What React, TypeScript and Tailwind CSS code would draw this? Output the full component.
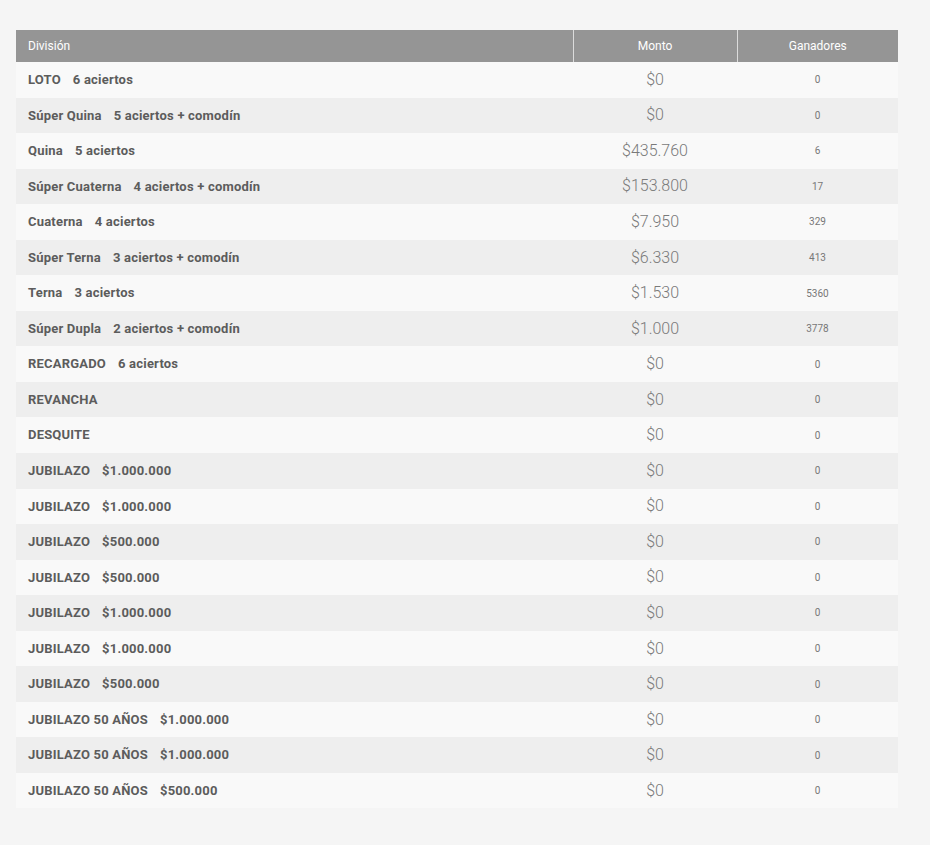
const rows: [string, string, string, string][] = [
  ["LOTO", "6 aciertos", "$0", "0"],
  ["Súper Quina", "5 aciertos + comodín", "$0", "0"],
  ["Quina", "5 aciertos", "$435.760", "6"],
  ["Súper Cuaterna", "4 aciertos + comodín", "$153.800", "17"],
  ["Cuaterna", "4 aciertos", "$7.950", "329"],
  ["Súper Terna", "3 aciertos + comodín", "$6.330", "413"],
  ["Terna", "3 aciertos", "$1.530", "5360"],
  ["Súper Dupla", "2 aciertos + comodín", "$1.000", "3778"],
  ["RECARGADO", "6 aciertos", "$0", "0"],
  ["REVANCHA", "", "$0", "0"],
  ["DESQUITE", "", "$0", "0"],
  ["JUBILAZO", "$1.000.000", "$0", "0"],
  ["JUBILAZO", "$1.000.000", "$0", "0"],
  ["JUBILAZO", "$500.000", "$0", "0"],
  ["JUBILAZO", "$500.000", "$0", "0"],
  ["JUBILAZO", "$1.000.000", "$0", "0"],
  ["JUBILAZO", "$1.000.000", "$0", "0"],
  ["JUBILAZO", "$500.000", "$0", "0"],
  ["JUBILAZO 50 AÑOS", "$1.000.000", "$0", "0"],
  ["JUBILAZO 50 AÑOS", "$1.000.000", "$0", "0"],
  ["JUBILAZO 50 AÑOS", "$500.000", "$0", "0"],
];

export default function App() {
  return (
    <div className="min-h-[845px] bg-[#f5f5f5] pt-[30px] pl-4 pr-8" style={{ fontFamily: "Roboto, 'Liberation Sans', sans-serif" }}>
      <table className="w-[882px] border-collapse">
        <thead>
          <tr className="h-[32px] bg-[#959595] text-white text-[12px]">
            <th className="text-left font-normal pl-3 w-[557px] border-r border-[#dcdcdc]">División</th>
            <th className="font-normal w-[164px] border-r border-[#dcdcdc]">Monto</th>
            <th className="font-normal">Ganadores</th>
          </tr>
        </thead>
        <tbody>
          {rows.map((r, i) => (
            <tr key={i} className={`h-[35.55px] ${i % 2 === 0 ? "bg-[#f9f9f9]" : "bg-[#eeeeee]"}`}>
              <td className="pl-3 text-[13px] font-bold text-[#5c5c5c] tracking-[0.2px] font-['Liberation_Sans',Arial,sans-serif]">
                {r[0]}
                {r[1] && <span className="ml-3">{r[1]}</span>}
              </td>
              <td className="text-center text-[16px] font-light text-[#7a7a7a]">{r[2]}</td>
              <td className="text-center text-[10px] text-[#777]">{r[3]}</td>
            </tr>
          ))}
        </tbody>
      </table>
    </div>
  );
}
